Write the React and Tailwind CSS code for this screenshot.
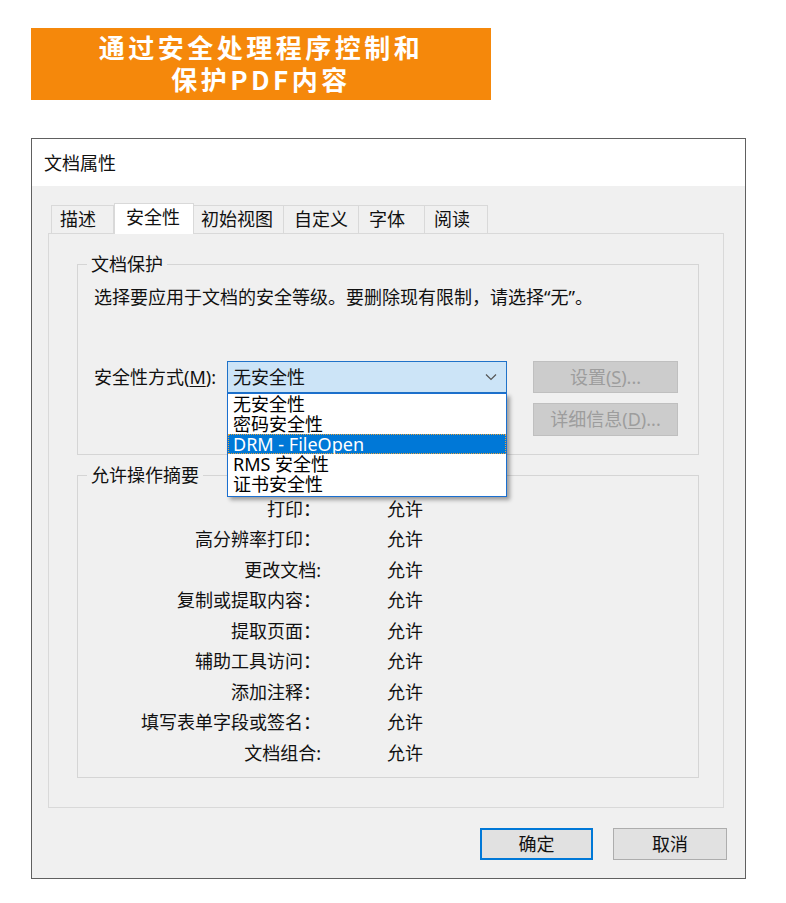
import React from 'react';

const tabs = [
  { label: '描述', w: 'w-[63px]', pl: 'pl-[8px]' },
  { label: '安全性', w: 'w-[80px]', pl: 'pl-[11px]', active: true },
  { label: '初始视图', w: 'w-[91px]', pl: 'pl-[7px]' },
  { label: '自定义', w: 'w-[76px]', pl: 'pl-[10px]' },
  { label: '字体', w: 'w-[67px]', pl: 'pl-[10px]' },
  { label: '阅读', w: 'w-[64px]', pl: 'pl-[9px]' },
];

const permissions = [
  '打印：',
  '高分辨率打印：',
  '更改文档:',
  '复制或提取内容：',
  '提取页面：',
  '辅助工具访问：',
  '添加注释：',
  '填写表单字段或签名：',
  '文档组合:',
];

const methods = ['无安全性', '密码安全性', 'DRM - FileOpen', 'RMS 安全性', '证书安全性'];

const Tab = ({ label, w, pl, active }) =>
  active ? (
    <div
      className={`${w} ${pl} h-[31px] relative z-10 -mb-px bg-white border border-b-0 border-[#d9d9d9] text-[18px] leading-[24px] pt-[1px]`}
    >
      {label}
    </div>
  ) : (
    <div
      className={`${w} ${pl} h-[28px] -ml-px first:ml-0 border border-b-0 border-[#d9d9d9] bg-[#f0f0f0] text-[18px] leading-[24px] pt-[1px]`}
    >
      {label}
    </div>
  );

const GroupBox = ({ title, className = '', children }) => (
  <fieldset className={`border border-[#d5d5d5] ${className}`}>
    <legend className="ml-[9px] px-[4px] text-[18px] leading-[24px]">{title}</legend>
    {children}
  </fieldset>
);

export default function App() {
  return (
    <div className="w-[786px] h-[903px] bg-white overflow-hidden font-['Noto_Sans','Noto_Sans_CJK_SC',sans-serif] text-[#111]">
      {/* Banner */}
      <div className="ml-[31px] mt-[28px] w-[460px] h-[72px] bg-[#f5880b] flex flex-col items-center pt-[3px] text-white font-bold text-[26px] leading-[32px] tracking-[3.5px] font-['Noto_Sans_CJK_SC',sans-serif]">
        <span>通过安全处理程序控制和</span>
        <span>保护PDF内容</span>
      </div>

      {/* Dialog */}
      <div className="ml-[31px] mt-[38px] w-[715px] h-[741px] border border-[#606060] flex flex-col">
        <div className="h-[47px] bg-white pl-[12px] flex items-center text-[18px] leading-[24px]">
          文档属性
        </div>

        <div className="flex-1 bg-[#f0f0f0] pl-[16px] pt-[17px]">
          {/* Tabs */}
          <div className="flex items-end pl-[3px] h-[30px]">
            {tabs.map((t) => (
              <Tab key={t.label} {...t} />
            ))}
          </div>

          {/* Tab panel */}
          <div className="w-[676px] h-[575px] border border-[#d9d9d9] bg-[#f0f0f0] pl-[28px] pt-[18px]">
            <GroupBox title="文档保护" className="w-[622px] pb-[18px]">
              <div className="pl-[16px]">
                <div className="mt-[9px] text-[18px] leading-[24px]">
                  选择要应用于文档的安全等级。要删除现有限制，请选择“无”。
                </div>

                <div className="mt-[52px] flex items-start">
                  <div className="w-[133px] h-[32px] flex items-center text-[18px]">
                    安全性方式(<span className="underline underline-offset-2">M</span>):
                  </div>

                  <div className="relative w-[280px] h-[32px] border border-[#1f72c9] bg-[#cce4f7] flex items-center justify-between pl-[5px] pr-[9px] text-[18px]">
                    <span>无安全性</span>
                    <svg width="12" height="8" viewBox="0 0 12 8" fill="none">
                      <polyline points="1,1.5 6,6.5 11,1.5" stroke="#555" strokeWidth="1.2" />
                    </svg>

                    {/* Open list */}
                    <div className="absolute left-[-1px] top-[31px] w-[280px] border border-[#1a6fd0] bg-white pb-[2px] shadow-[3px_3px_4px_rgba(0,0,0,0.35)] z-20">
                      {methods.map((m) => (
                        <div
                          key={m}
                          className={
                            m.startsWith('DRM')
                              ? 'h-[20px] leading-[20px] pl-[5px] text-[18px] bg-[#0078d7] text-white outline-1 outline-dotted outline-[#e8a33c] -outline-offset-1'
                              : 'h-[20px] leading-[20px] pl-[5px] text-[18px] text-black'
                          }
                        >
                          {m}
                        </div>
                      ))}
                    </div>
                  </div>

                  <div className="ml-[26px] flex flex-col gap-[10px]">
                    <div className="w-[145px] h-[32px] bg-[#cccccc] border border-[#bfbfbf] text-[#9d9d9d] text-[18px] flex items-center justify-center">
                      设置(<span className="underline underline-offset-2">S</span>)...
                    </div>
                    <div className="w-[145px] h-[33px] bg-[#cccccc] border border-[#bfbfbf] text-[#9d9d9d] text-[18px] flex items-center justify-center">
                      详细信息(<span className="underline underline-offset-2">D</span>)...
                    </div>
                  </div>
                </div>
              </div>
            </GroupBox>

            <GroupBox title="允许操作摘要" className="mt-[8px] w-[622px] pt-[7px] pb-[8px]">
              {permissions.map((p) => (
                <div key={p} className="h-[30.5px] flex items-center text-[18px]">
                  <div className="w-[243px] text-right">{p}</div>
                  <div className="ml-[66px]">允许</div>
                </div>
              ))}
            </GroupBox>
          </div>

          {/* Dialog buttons */}
          <div className="mt-[20px] ml-[432px] flex gap-[20px]">
            <div className="w-[113px] h-[32px] bg-[#e1e1e1] border-2 border-[#0078d7] flex items-center justify-center text-[18px]">
              确定
            </div>
            <div className="w-[114px] h-[32px] bg-[#e1e1e1] border border-[#adadad] flex items-center justify-center text-[18px]">
              取消
            </div>
          </div>
        </div>
      </div>
    </div>
  );
}
